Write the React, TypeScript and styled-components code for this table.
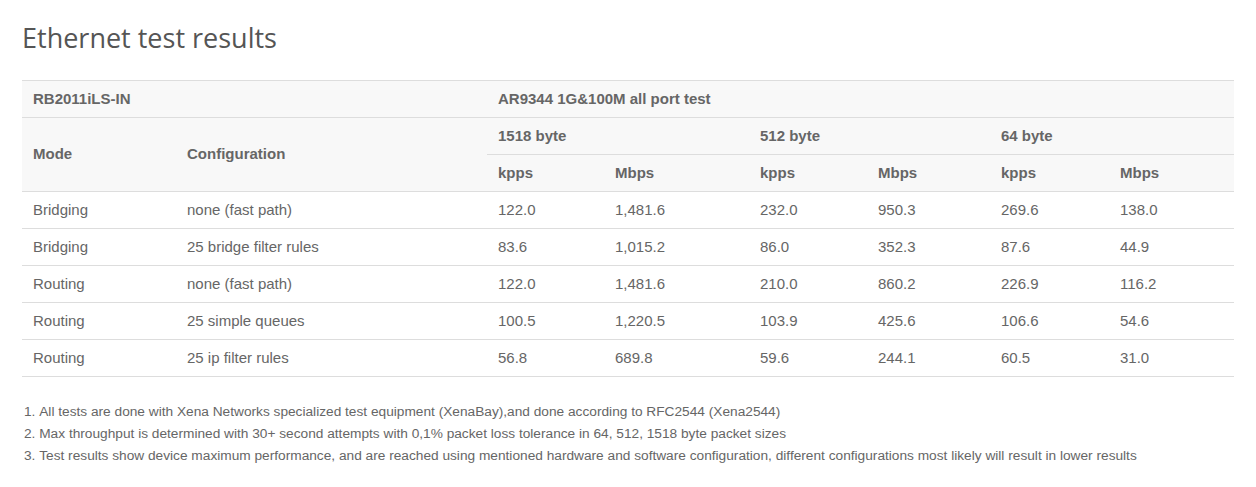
import React from "react";
import styled, { createGlobalStyle } from "styled-components";

const GlobalStyle = createGlobalStyle`
  body {
    margin: 0;
    background: #fff;
    font-family: "Liberation Sans", Arial, sans-serif;
    color: #666;
  }
`;

const Page = styled.div`
  padding: 20px 22px 0 22px;
  width: 1212px;
`;

const Title = styled.h2`
  margin: 0 0 24px 0;
  font-family: "Open Sans", sans-serif;
  font-weight: 400;
  font-size: 27px;
  line-height: 36px;
  color: #555;
`;

const Table = styled.table`
  width: 1212px;
  border-collapse: collapse;
  table-layout: fixed;
  border-top: 1px solid #ddd;
  font-size: 15px;
`;

const Head = styled.thead`
  background: #f8f8f8;
`;

const Th = styled.th`
  height: 34px;
  padding: 0 11px 2px 11px;
  text-align: left;
  font-weight: 700;
  color: #666;
  border-bottom: 1px solid #ddd;
`;

const Td = styled.td`
  height: 34px;
  padding: 0 11px 2px 11px;
  color: #666;
  border-bottom: 1px solid #ddd;
`;

const Notes = styled.ol`
  margin: 24px 0 0 0;
  padding: 0 0 0 2px;
  list-style-position: inside;
  font-size: 13.7px;
  line-height: 22px;
  color: #666;
`;

const widths = [154, 311, 117, 145, 118, 123, 119, 125];

const rows = [
  ["Bridging", "none (fast path)", "122.0", "1,481.6", "232.0", "950.3", "269.6", "138.0"],
  ["Bridging", "25 bridge filter rules", "83.6", "1,015.2", "86.0", "352.3", "87.6", "44.9"],
  ["Routing", "none (fast path)", "122.0", "1,481.6", "210.0", "860.2", "226.9", "116.2"],
  ["Routing", "25 simple queues", "100.5", "1,220.5", "103.9", "425.6", "106.6", "54.6"],
  ["Routing", "25 ip filter rules", "56.8", "689.8", "59.6", "244.1", "60.5", "31.0"],
];

const notes = [
  "All tests are done with Xena Networks specialized test equipment (XenaBay),and done according to RFC2544 (Xena2544)",
  "Max throughput is determined with 30+ second attempts with 0,1% packet loss tolerance in 64, 512, 1518 byte packet sizes",
  "Test results show device maximum performance, and are reached using mentioned hardware and software configuration, different configurations most likely will result in lower results",
];

export default function App() {
  return (
    <Page>
      <GlobalStyle />
      <Title>Ethernet test results</Title>
      <Table>
        <colgroup>
          {widths.map((w, i) => (
            <col key={i} style={{ width: w }} />
          ))}
        </colgroup>
        <Head>
          <tr>
            <Th colSpan={2}>RB2011iLS-IN</Th>
            <Th colSpan={6}>AR9344 1G&amp;100M all port test</Th>
          </tr>
          <tr>
            <Th rowSpan={2}>Mode</Th>
            <Th rowSpan={2}>Configuration</Th>
            <Th colSpan={2}>1518 byte</Th>
            <Th colSpan={2}>512 byte</Th>
            <Th colSpan={2}>64 byte</Th>
          </tr>
          <tr>
            <Th>kpps</Th>
            <Th>Mbps</Th>
            <Th>kpps</Th>
            <Th>Mbps</Th>
            <Th>kpps</Th>
            <Th>Mbps</Th>
          </tr>
        </Head>
        <tbody>
          {rows.map((r, i) => (
            <tr key={i}>
              {r.map((c, j) => (
                <Td key={j}>{c}</Td>
              ))}
            </tr>
          ))}
        </tbody>
      </Table>
      <Notes>
        {notes.map((n, i) => (
          <li key={i}>{n}</li>
        ))}
      </Notes>
    </Page>
  );
}
